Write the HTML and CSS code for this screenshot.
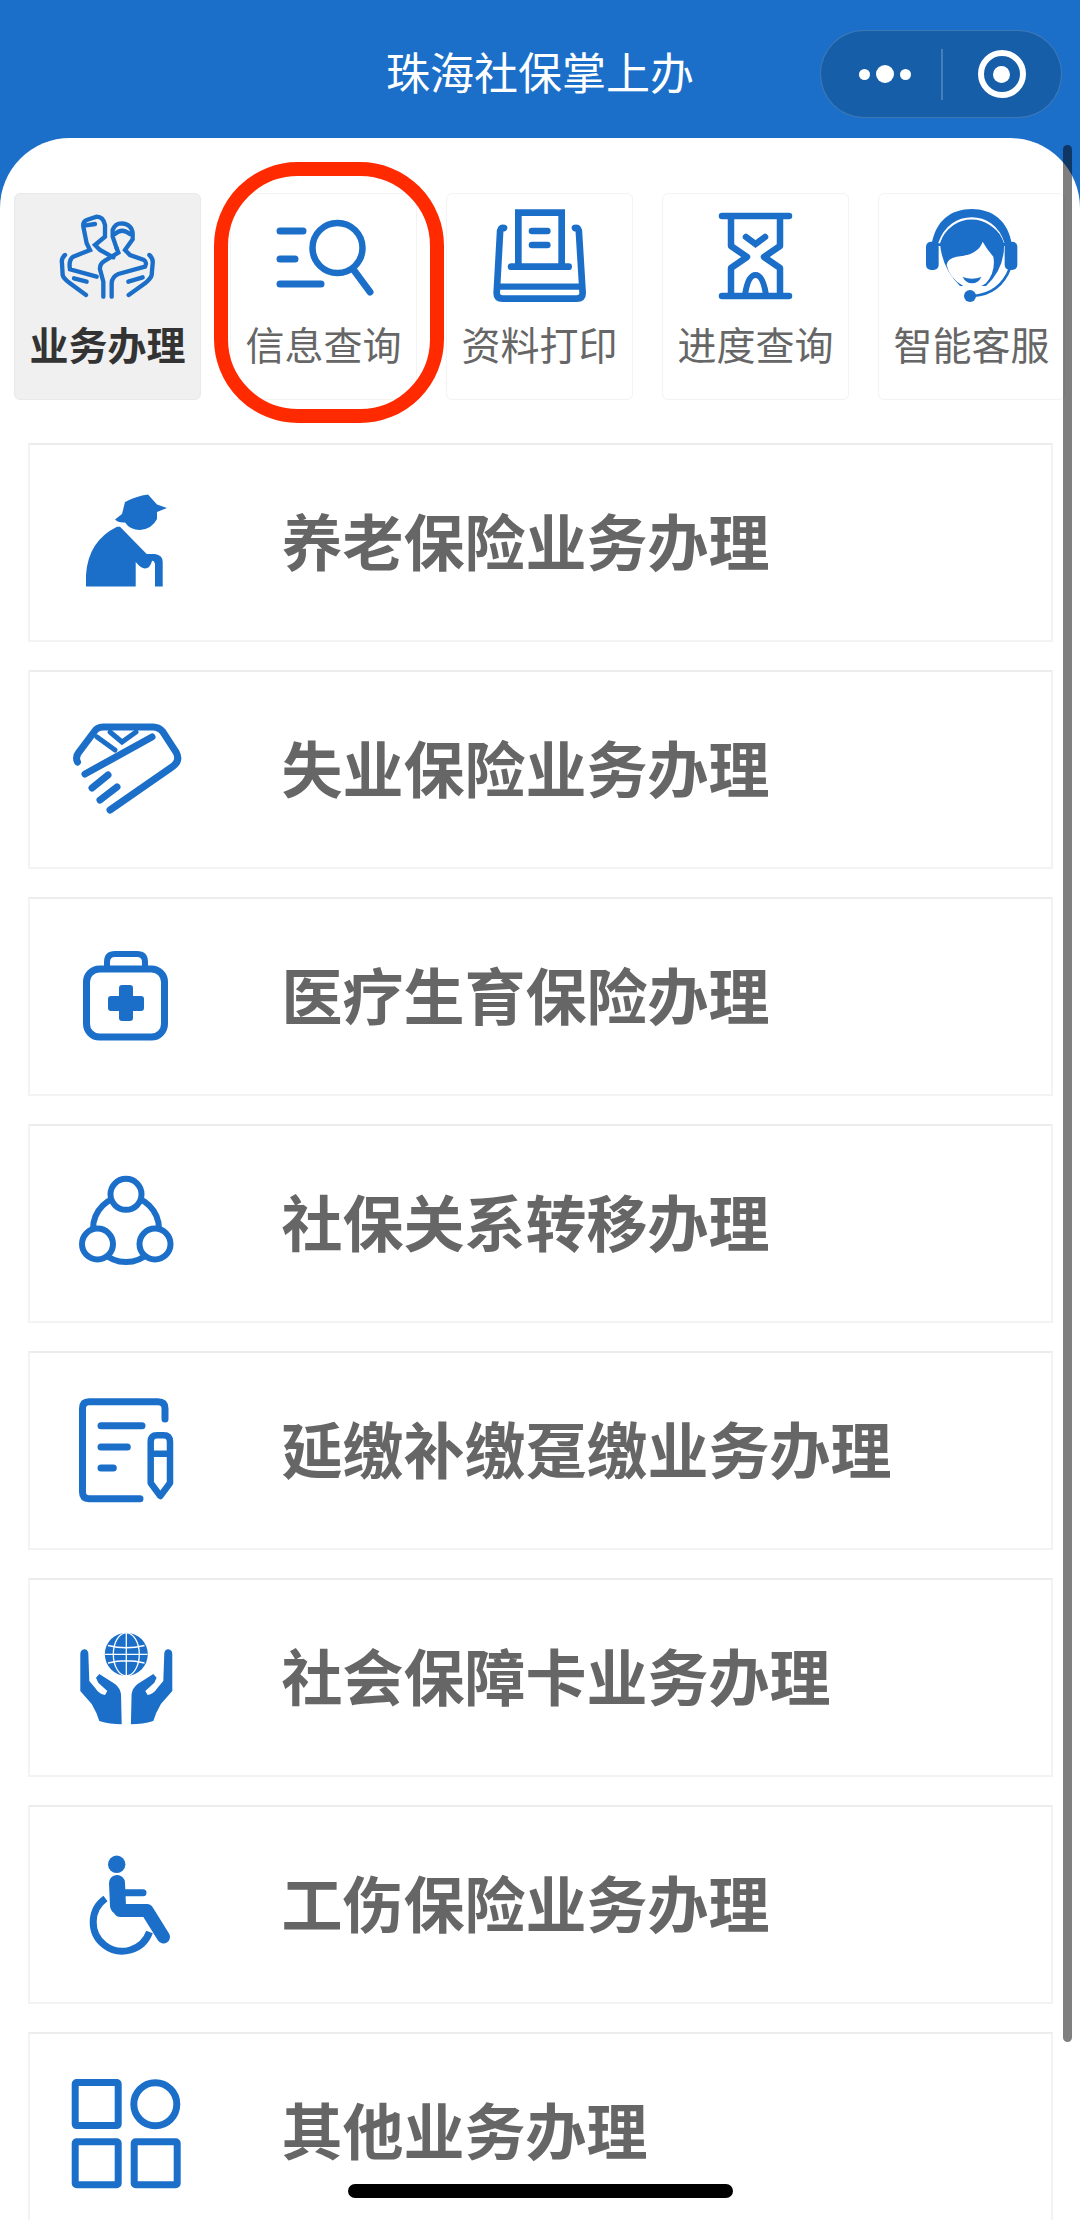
FILE: index.html
```html
<!DOCTYPE html>
<html lang="zh-CN">
<head>
<meta charset="utf-8">
<title>珠海社保掌上办</title>
<link rel="stylesheet" href="styles.css">
</head>
<body>
<div class="page">
  <header class="nav">
    <h1 class="nav-title">珠海社保掌上办</h1>
    <div class="capsule">
      <div class="capsule-dots"><i class="dot"></i><i class="dot dot-big"></i><i class="dot"></i></div>
      <div class="capsule-line"></div>
      <div class="capsule-target"><i></i></div>
    </div>
  </header>
  <main class="sheet">
    <nav class="tabs">
      <div class="tab tab-active">
        <svg class="tab-ico" viewBox="-6 0 360 360"><g class="s" stroke-width="13">
          <path d="M190 172L150 150L135 135L165 110V75Q160 50 140 50L110 60Q98 65 100 80L110 130L120 150L70 170Q55 180 60 208L140 230"/>
          <path d="M108 76L135 72"/>
          <path d="M200 145L188 110V90Q195 70 215 70Q245 72 248 100V118L225 150L240 165L282 180Q292 186 285 200L205 222Q186 230 185 250V290"/>
          <path d="M200 145L205 158L165 182Q148 192 150 208L160 245V290"/>
          <path d="M195 102Q215 82 240 102"/>
          <path d="M45 165Q33 175 36 190L38 225Q40 235 60 250L108 285"/>
          <path d="M72 235L110 245"/>
          <path d="M298 165Q310 175 308 190L305 225Q303 235 285 250L236 285"/>
          <path d="M235 245L278 232"/>
        </g></svg>
        <span class="tab-label">业务办理</span>
      </div>
      <div class="tab">
        <svg class="tab-ico" viewBox="264 200 120 120"><g class="s" stroke-width="7">
          <path d="M280 231H303M280 259H295M280 284H321"/>
          <circle cx="337.500" cy="248" r="25" stroke-width="6.500"/>
          <path d="M354.500 271L370 292"/>
        </g></svg>
        <span class="tab-label">信息查询</span>
        <div class="ring"></div>
      </div>
      <div class="tab">
        <svg class="tab-ico" viewBox="0 0 360 360"><g class="s" stroke-width="20">
          <path d="M115 195V38H245V195M93 200H266M156 93H202M156 135H202"/>
          <path d="M72 84Q60 80 60 100L50 280Q50 296 68 296H290Q308 296 308 280L297 100Q297 80 285 84" stroke-linejoin="round"/>
          <path d="M55 260H303" stroke-width="19"/>
        </g></svg>
        <span class="tab-label">资料打印</span>
      </div>
      <div class="tab">
        <svg class="tab-ico" viewBox="696 200 120 120"><g class="s" stroke-width="6.500">
          <path d="M722 216H789M722 296H789"/>
          <path d="M731 217V246L747 257L731 268V295M780 217V246L764 257L780 268V295" stroke-linecap="butt" stroke-linejoin="round"/>
          <path d="M746 237L755.500 244L765 237"/>
          <path d="M745 295Q748 275 755.500 275Q763 275 766 295" stroke-width="6" stroke-linecap="butt"/>
        </g></svg>
        <span class="tab-label">进度查询</span>
      </div>
      <div class="tab">
        <svg class="tab-ico" viewBox="6 0 360 360">
          <path class="f" d="M64 138C75 60 125 27 185 27C245 27 296 60 306 138Z"/>
          <rect class="f" x="48" y="125" width="38" height="85" rx="15"/>
          <rect class="f" x="284" y="125" width="38" height="85" rx="15"/>
          <path class="w-line" d="M88 130C105 78 145 55 185 55C225 55 265 78 280 130"/>
          <path class="f" d="M90 130Q96 205 150 258L228 258Q285 205 282 130Q262 65 185 65Q110 65 90 130Z"/>
          <path class="w" d="M218 125Q205 165 140 170Q112 175 110 195Q118 235 160 258Q198 272 228 250Q258 215 250 170Q232 150 218 125Z"/>
          <path class="f" d="M158 231Q185 242 214 231Q205 250 186 250Q168 250 158 231Z"/>
          <circle class="f" cx="180" cy="288" r="18"/>
          <path class="s" stroke-width="8" d="M190 288Q270 282 300 205"/>
        </svg>
        <span class="tab-label">智能客服</span>
      </div>
    </nav>

    <section class="list">
      <article class="row">
        <svg class="row-ico" viewBox="60 472 140 140">
          <path class="f" d="M115 518.600L122 513L125 501Q136 495 148 493.500L157 503.500L167 507L157 511V518Q152 528 140 529Q130 529 125 521.500Q118 522 115 518.600Z"/>
          <path class="f" d="M86 585.500V574Q88 540 117 525.700H120L146.700 553H155Q162.700 554 162.700 561V585.500H155V563Q154 559 152 560Q150 567.500 145 567.500Q141 567.500 135.700 561V585.500Z"/>
        </svg>
        <span class="row-text">养老保险业务办理</span>
      </article>
      <article class="row">
        <svg class="row-ico" viewBox="60 699 140 140"><g class="s" stroke-width="7">
          <path d="M77.500 761Q75 756 79 751L94 731Q97 726 103 726H153Q159 726 163 731L176 751Q181 760 172 766L110 809"/>
          <path d="M85 773L152 736"/>
          <path d="M97 736L115 749M110 731L122 741L136 731" stroke-width="5"/>
          <path d="M92 787L108 774M100 799L117 786"/>
        </g></svg>
        <span class="row-text">失业保险业务办理</span>
      </article>
      <article class="row">
        <svg class="row-ico" viewBox="60 923 140 140">
          <g class="s" stroke-width="7">
            <rect x="86.500" y="965" width="78" height="68" rx="13"/>
            <path d="M107 964V958Q107 950 115 950H137Q145 950 145 958V964" stroke-width="6"/>
          </g>
          <rect class="f" x="119" y="981" width="14" height="36" rx="3"/>
          <rect class="f" x="108" y="992" width="36" height="15" rx="3"/>
        </svg>
        <span class="row-text">医疗生育保险办理</span>
      </article>
      <article class="row">
        <svg class="row-ico" viewBox="60 1153 140 140">
          <circle class="s" stroke-width="6" cx="126" cy="1228" r="33"/>
          <g class="ws" stroke-width="6">
            <circle cx="126" cy="1193.300" r="15.500"/>
            <circle cx="97.500" cy="1243" r="15.500"/>
            <circle cx="155" cy="1243" r="15.500"/>
          </g>
        </svg>
        <span class="row-text">社保关系转移办理</span>
      </article>
      <article class="row">
        <svg class="row-ico" viewBox="60 1380 140 140"><g class="s" stroke-width="7">
          <path d="M140 1497.700H89Q82.500 1497.700 82.500 1491V1407.500Q82.500 1400.700 89 1400.700H158Q165 1400.700 165 1407.500V1418"/>
          <path d="M101 1424.700H142M101 1446H127.300M101 1467H113.300"/>
          <path d="M150.700 1482V1441Q150.700 1434.300 157 1434.300H163.700Q170 1434.300 170 1441V1482L160.300 1495Z M150.700 1452.700H170" stroke-width="6.500" stroke-linejoin="round"/>
        </g></svg>
        <span class="row-text">延缴补缴趸缴业务办理</span>
      </article>
      <article class="row">
        <svg class="row-ico" viewBox="60 1607 140 140">
          <circle class="f" cx="126.300" cy="1653.300" r="21.500"/>
          <g class="globe-lines" stroke-width="1.300">
            <ellipse cx="126.300" cy="1653.300" rx="13" ry="21.500"/>
            <path d="M126.300 1632V1675M105 1653.300H147.500M108 1644.500Q126.300 1649 144.500 1644.500M108 1662Q126.300 1657.500 144.500 1662"/>
          </g>
          <path class="f" d="M84.300 1648.300Q80.300 1649 80.300 1653V1690L91.700 1703Q97 1712 99.300 1720Q110 1723.300 121.700 1723.300L121 1693Q120 1687 115 1683L99.300 1673L96 1676.700L98.300 1681.700L107.300 1690L105 1694Q99 1693 95 1686.700L89.300 1680L88.300 1651.700Q87 1648 84.300 1648.300Z"/>
          <g transform="translate(252.600 0) scale(-1 1)">
            <path class="f" d="M84.300 1648.300Q80.300 1649 80.300 1653V1690L91.700 1703Q97 1712 99.300 1720Q110 1723.300 121.700 1723.300L121 1693Q120 1687 115 1683L99.300 1673L96 1676.700L98.300 1681.700L107.300 1690L105 1694Q99 1693 95 1686.700L89.300 1680L88.300 1651.700Q87 1648 84.300 1648.300Z"/>
          </g>
        </svg>
        <span class="row-text">社会保障卡业务办理</span>
      </article>
      <article class="row">
        <svg class="row-ico" viewBox="60 1834 140 140">
          <circle class="f" cx="116.700" cy="1863.300" r="8.700"/>
          <path class="s" stroke-width="16" d="M117 1882L118 1905"/>
          <path class="s" stroke-width="13" d="M120 1909.500H147L163.500 1936" stroke-linejoin="round"/>
          <path class="s" stroke-width="7" d="M125 1891.700H143"/>
          <path class="s butt" stroke-width="7" d="M105.500 1897.500A29 29 0 1 0 149.500 1931"/>
        </svg>
        <span class="row-text">工伤保险业务办理</span>
      </article>
      <article class="row">
        <svg class="row-ico" viewBox="60 2061 140 140"><g class="s" stroke-width="7">
          <rect x="75.200" y="2081.600" width="43" height="43" rx="1.500"/>
          <circle cx="155.300" cy="2103.200" r="21.500"/>
          <rect x="75.200" y="2140.800" width="43" height="43" rx="1.500"/>
          <rect x="134.200" y="2140.800" width="43" height="43" rx="1.500"/>
        </g></svg>
        <span class="row-text">其他业务办理</span>
      </article>
    </section>
  </main>
  <div class="scrollbar"></div>
  <div class="home-bar"></div>
</div>
</body>
</html>
```

FILE: styles.css
```css
* { box-sizing: border-box; }
html, body { margin: 0; padding: 0; }
body { width: 1080px; height: 2220px; overflow: hidden; background: #fff; font-family: "Noto Sans CJK SC", "Noto Sans", sans-serif; }

.page { position: relative; width: 1080px; height: 2220px; overflow: hidden; background: #1c6fc9; }

.nav { position: relative; height: 138px; padding-top: 3px; display: flex; align-items: center; justify-content: center; }
.nav-title { margin: 0; font-size: 44px; font-weight: 400; line-height: 60px; color: #fff; }

.capsule { position: absolute; left: 820px; top: 30px; width: 242px; height: 88px; display: flex; align-items: center; border: 1px solid rgba(255,255,255,.17); border-radius: 44px; background: #175ea9; }
.capsule-dots { width: 120px; display: flex; align-items: center; justify-content: center; gap: 6px; padding-left: 8px; }
.dot { display: block; width: 11px; height: 11px; border-radius: 50%; background: #fff; }
.dot-big { width: 18px; height: 18px; }
.capsule-line { width: 1.500px; height: 51px; background: rgba(255,255,255,.2); }
.capsule-target { flex: 1; display: flex; align-items: center; justify-content: center; }
.capsule-target i { display: flex; width: 48px; height: 48px; border: 6px solid #fff; border-radius: 50%; align-items: center; justify-content: center; }
.capsule-target i::after { content: ""; width: 17px; height: 17px; border-radius: 50%; background: #fff; }

.sheet { height: 2082px; background: #fff; border-radius: 70px 70px 0 0; padding-top: 55px; }

.tabs { display: flex; gap: 29px; padding-left: 14px; height: 207px; }
.tab { position: relative; flex: 0 0 187px; height: 207px; display: flex; flex-direction: column; align-items: center; border: 1px solid #f3f3f3; border-radius: 6px; background: #fff; }
.tab-active { background: #f0f0f0; border-color: #e9e9e9; }
.tab-ico { display: block; width: 120px; height: 120px; flex: none; margin-top: 6px; }
.tab-label { margin-top: 1px; font-size: 39px; line-height: 44px; color: #666; white-space: nowrap; }
.tab-active .tab-label { font-weight: 700; color: #333; }
.ring { position: absolute; left: -17px; top: -32px; width: 230px; height: 261px; border: 14px solid #ff2a00; border-radius: 84px; }

.list { display: flex; flex-direction: column; gap: 28px; margin: 43px 27px 0 28px; }
.row { flex: none; height: 199px; display: flex; align-items: center; border: 2px solid #f3f3f3; border-top-color: #ececec; background: #fff; }
.row-ico { display: block; flex: none; width: 140px; height: 140px; margin-left: 30px; }
.row-text { margin-left: 81.500px; padding-bottom: 6px; font-size: 61px; font-weight: 700; line-height: 84px; color: #666; white-space: nowrap; }

.s { fill: none; stroke: #1b6fc9; stroke-linecap: round; }
.butt { stroke-linecap: butt; }
.f { fill: #1b6fc9; }
.w { fill: #fff; }
.w-line { fill: none; stroke: #fff; stroke-width: 7; }
.ws { fill: #fff; stroke: #1b6fc9; }
.globe-lines { fill: none; stroke: #fff; }

.scrollbar { position: absolute; left: 1063px; top: 145px; width: 9px; height: 1897px; border-radius: 5px; background: rgba(0,0,0,.5); }
.home-bar { position: absolute; left: 348px; top: 2184px; width: 385px; height: 14px; border-radius: 7px; background: #000; }
```
